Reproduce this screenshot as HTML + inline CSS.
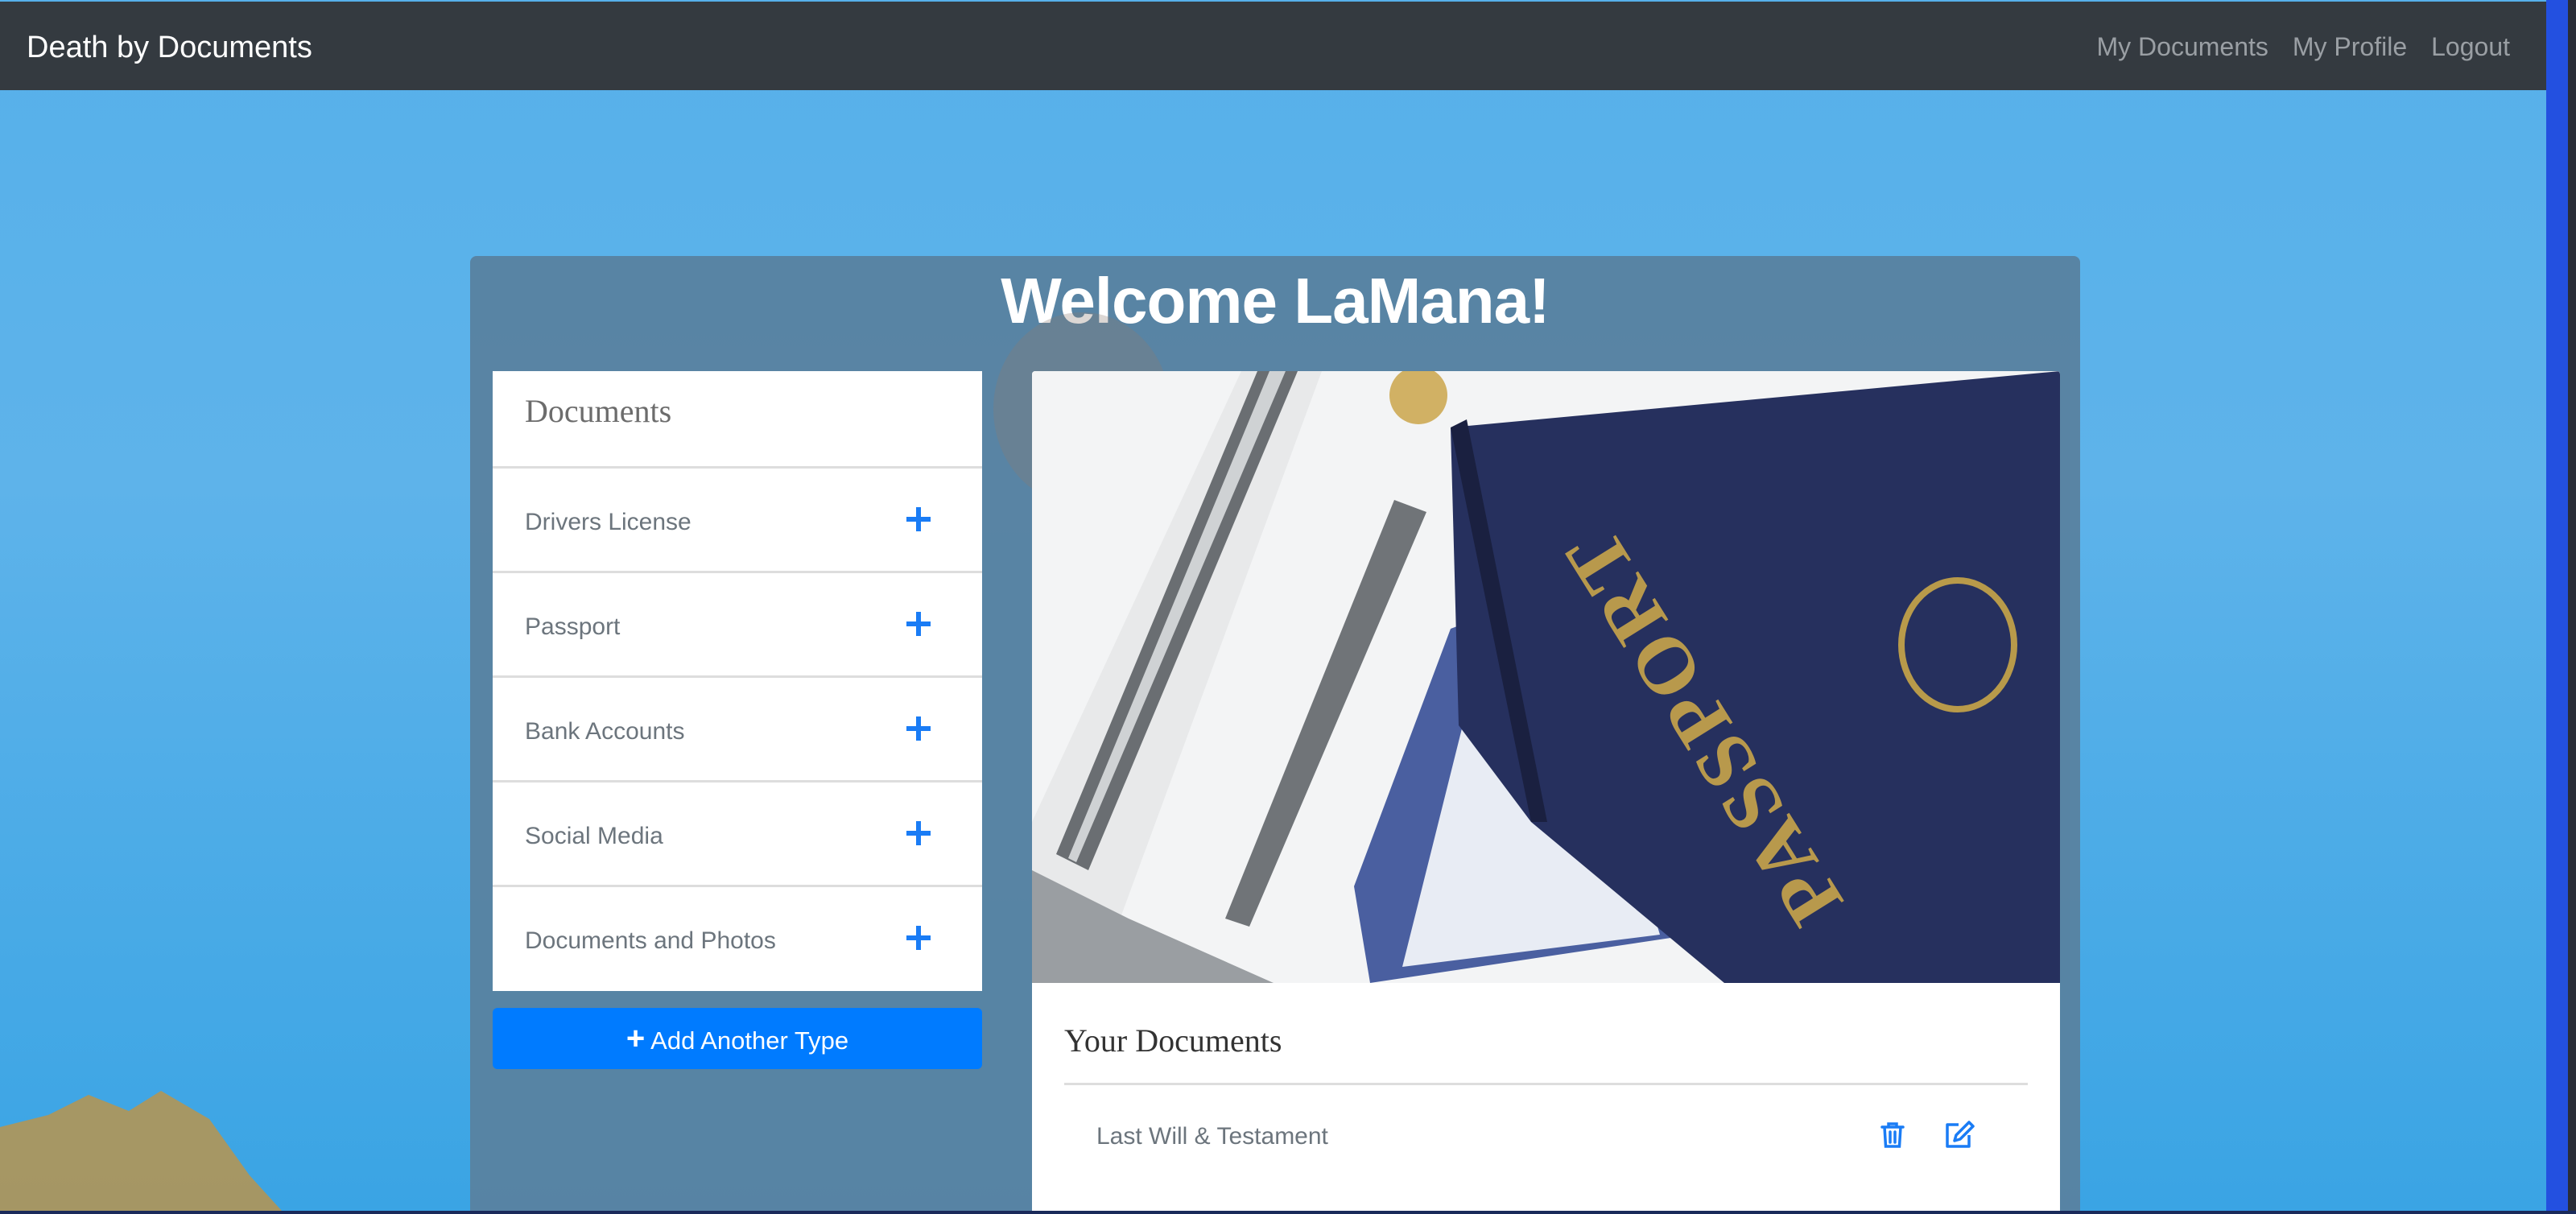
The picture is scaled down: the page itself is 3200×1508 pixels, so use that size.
<!DOCTYPE html>
<html><head><meta charset="utf-8"><style>
*{margin:0;padding:0;box-sizing:border-box}
html,body{width:3200px;height:1508px;overflow:hidden}
body{position:relative;font-family:"Liberation Sans",sans-serif;background:#1e2a44}
#wrap{position:absolute;left:0;top:0;width:3200px;height:1508px;overflow:hidden}
.bg{position:absolute;left:0;top:0;width:3163px;height:1504px;background:linear-gradient(180deg,#56b0ea 0%,#5eb3ea 40%,#3aa4e4 100%)}
.stripe{position:absolute;left:3163px;top:0;width:27px;height:1508px;background:#2350e0}
.stripe2{position:absolute;left:3190px;top:0;width:10px;height:1508px;background:#2a2e38}
.nav{position:absolute;left:0;top:2px;width:3163px;height:110px;background:#343a40}
.brand{position:absolute;left:33px;top:36px;font-size:38px;color:#fff}
.links{position:absolute;right:45px;top:38px;font-size:32px;color:#9a9fa4}
.links span{margin-left:30px}
.panel{position:absolute;left:584px;top:318px;width:2000px;height:1186px;background:rgba(88,130,160,.95);border-radius:8px 8px 0 0;overflow:hidden}
.title{position:absolute;left:0;width:2000px;top:10px;text-align:center;font-size:80px;font-weight:bold;color:#fff;letter-spacing:-1px}
.lcard{position:absolute;left:612px;top:461px;width:608px;height:770px;background:#fff}
.lhead{height:121px;border-bottom:3px solid #ddd;font-family:"Liberation Serif",serif;font-size:40px;color:#6c6c6c;padding:26px 0 0 40px}
.row{height:130px;border-bottom:3px solid #ddd;position:relative;font-size:30px;color:#6c757d;padding:50px 0 0 40px}
.row:last-child{border-bottom:none}
.plus{position:absolute;left:514px;top:48px;width:30px;height:30px}
.plus:before{content:"";position:absolute;left:12px;top:0;width:6px;height:30px;background:#1a7cf5}
.plus:after{content:"";position:absolute;left:0;top:12px;width:30px;height:6px;background:#1a7cf5}
.btn{position:absolute;left:612px;top:1252px;width:608px;height:76px;background:#007bff;border-radius:6px;color:#fff;font-size:31px;text-align:center;line-height:76px}
.rcard{position:absolute;left:1282px;top:461px;width:1277px;height:1043px;background:#fff;border-radius:4px 4px 0 0;overflow:hidden}
.rhead{position:absolute;left:40px;top:808px;font-family:"Liberation Serif",serif;font-size:40px;color:#333}
.hr{position:absolute;left:40px;top:884px;width:1197px;height:3px;background:#ddd}
.doc{position:absolute;left:80px;top:934px;font-size:30px;color:#6c757d}
.bottom{position:absolute;left:0;top:1504px;width:3200px;height:4px;background:#1a2a5a}
</style></head><body><div id="wrap">
<div class="bg"></div>
<svg style="position:absolute;left:0;top:1330px" width="400" height="174"><path d="M0 174 L0 70 L60 55 L110 30 L160 50 L200 25 L260 60 L310 130 L350 174Z" fill="#b8944e" opacity=".85"/></svg>
<div class="stripe"></div><div class="stripe2"></div>
<div class="nav"><div class="brand">Death by Documents</div><div class="links"><span>My Documents</span><span>My Profile</span><span>Logout</span></div></div>
<div class="panel"><div class="title">Welcome LaMana!</div>
<svg style="position:absolute;left:620px;top:60px" width="640" height="1126"><ellipse cx="140" cy="130" rx="110" ry="120" fill="#8a7a70" opacity=".3"/><rect x="100" y="920" width="360" height="220" fill="#aab4c0" opacity=".6"/><g stroke="#7a90b0" stroke-width="14" opacity=".5"><line x1="100" y1="960" x2="460" y2="960"/><line x1="100" y1="1000" x2="460" y2="1000"/><line x1="100" y1="1040" x2="460" y2="1040"/><line x1="100" y1="1080" x2="460" y2="1080"/><line x1="100" y1="1120" x2="460" y2="1120"/></g></svg>
</div>
<div class="lcard"><div class="lhead">Documents</div>
<div class="row">Drivers License<div class="plus"></div></div>
<div class="row">Passport<div class="plus"></div></div>
<div class="row">Bank Accounts<div class="plus"></div></div>
<div class="row">Social Media<div class="plus"></div></div>
<div class="row">Documents and Photos<div class="plus"></div></div>
</div>
<div class="btn"><b style="font-size:40px">+</b> Add Another Type</div>
<div class="rcard">
<svg width="1277" height="760" style="position:absolute;left:0;top:0">
<rect width="1277" height="760" fill="#f3f4f5"/>
<polygon points="0,560 260,0 360,0 80,760 0,760" fill="#e8e9ea"/>
<polygon points="280,0 330,0 70,620 30,600" fill="#6a6e72"/>
<polygon points="295,0 315,0 55,610 45,605" fill="#cfd2d4"/>
<polygon points="450,160 490,175 270,690 240,680" fill="#707478"/>
<polygon points="520,320 680,260 820,700 420,760 400,640" fill="#4a5fa0"/>
<polygon points="560,340 660,300 780,700 460,740" fill="#e8ecf4"/>
<polygon points="600,360 660,330 700,460 620,500" fill="#3a50a0"/>
<polygon points="0,620 120,680 300,760 0,760" fill="#9a9ea2"/>
<polygon points="520,70 1277,0 1277,760 860,760 620,560 530,440" fill="#26305e"/>
<polygon points="520,70 540,60 640,560 620,560" fill="#1a2040"/>
<ellipse cx="1150" cy="340" rx="70" ry="80" fill="none" stroke="#b89a4a" stroke-width="8"/>
<text x="0" y="0" transform="translate(1010,660) rotate(-122)" font-family="Liberation Serif,serif" font-size="100" font-weight="bold" fill="#b8994c" letter-spacing="6">PASSPORT</text>
<circle cx="480" cy="30" r="36" fill="#c8a040" opacity=".8"/>
</svg>
<div class="rhead">Your Documents</div>
<div class="hr"></div>
<div class="doc">Last Will &amp; Testament</div>
<svg style="position:absolute;left:1054px;top:932px" width="30" height="34" viewBox="0 0 30 34" fill="none" stroke="#1a7cf5" stroke-width="3.5" stroke-linecap="round"><path d="M2 7h26M10 7V3h10v4M5 7l1.5 24h17L25 7M12 13v13M18 13v13"/></svg>
<svg style="position:absolute;left:1134px;top:930px" width="38" height="36" viewBox="0 0 38 36" fill="none" stroke="#1a7cf5" stroke-width="3.5" stroke-linejoin="round"><path d="M17 6H3v27h27V19"/><path d="M30 3l5 5-16 16-7 2 2-7z"/></svg>
</div>
<div class="bottom"></div>
</div></body></html>
